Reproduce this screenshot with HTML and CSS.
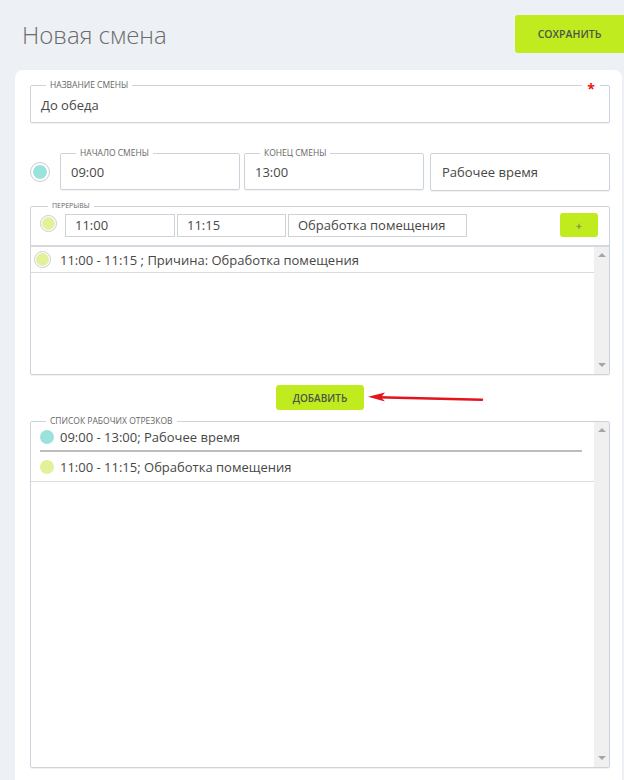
FILE: index.html
```html
<!DOCTYPE html>
<html lang="ru">
<head>
    <meta charset="UTF-8">
    <meta name="viewport" content="width=device-width, initial-scale=1.0">
    <title>Новая смена</title>
    <link rel="stylesheet" href="styles.css">
</head>
<body>
    <div class="top">
        <h1 class="title">Новая смена</h1>
        <button class="btn btn-save">СОХРАНИТЬ</button>
    </div>

    <div class="card">
        <fieldset class="field field-name">
            <legend>НАЗВАНИЕ СМЕНЫ</legend>
            <span class="req">*</span>
            <div class="value">До обеда</div>
        </fieldset>

        <div class="time-row">
            <span class="dot dot-ring dot-big teal"></span>
            <fieldset class="field field-time">
                <legend>НАЧАЛО СМЕНЫ</legend>
                <div class="value">09:00</div>
            </fieldset>
            <fieldset class="field field-time">
                <legend>КОНЕЦ СМЕНЫ</legend>
                <div class="value">13:00</div>
            </fieldset>
            <div class="plain-box">Рабочее время</div>
        </div>

        <fieldset class="field group breaks">
            <legend>ПЕРЕРЫВЫ</legend>
            <div class="break-form">
                <span class="dot dot-ring lime"></span>
                <div class="inp inp-from">11:00</div>
                <div class="inp inp-to">11:15</div>
                <div class="inp inp-reason">Обработка помещения</div>
                <button class="btn btn-plus">+</button>
            </div>
            <div class="listbox breaks-list">
                <div class="list-items">
                    <div class="item">
                        <span class="dot dot-ring lime"></span>
                        11:00 - 11:15 ; Причина: Обработка помещения
                    </div>
                </div>
                <div class="scroll"><span class="arr up"></span><span class="arr down"></span></div>
            </div>
        </fieldset>

        <div class="add-row">
            <button class="btn btn-add">ДОБАВИТЬ</button>
            <!-- annotation arrow -->
            <svg class="pointer" width="120" height="16" viewBox="0 0 120 16">
                <line x1="12" y1="8.2" x2="116" y2="10.8" stroke="#e3141c" stroke-width="2.4" stroke-linecap="round"/>
                <polygon points="2,7.7 19,3.6 15,8.3 19,12.4" fill="#e3141c"/>
            </svg>
        </div>

        <fieldset class="field group segments">
            <legend>СПИСОК РАБОЧИХ ОТРЕЗКОВ</legend>
            <div class="listbox seg-list">
                <div class="list-items">
                    <div class="seg seg-first">
                        <span class="dot teal"></span>
                        09:00 - 13:00; Рабочее время
                    </div>
                    <div class="seg-sep"></div>
                    <div class="seg seg-last">
                        <span class="dot lime"></span>
                        11:00 - 11:15; Обработка помещения
                    </div>
                </div>
                <div class="scroll"><span class="arr up"></span><span class="arr down"></span></div>
            </div>
        </fieldset>
    </div>
</body>
</html>
```

FILE: styles.css
```css
body {
    margin: 0;
    background: #edf0f4;
    font-family: 'Open Sans', sans-serif;
    font-size: 13px;
    color: #474747;
}
.top {
    display: flex;
    align-items: center;
    justify-content: space-between;
    height: 68px;
    padding-left: 22px;
}
.title {
    margin: 0;
    font-size: 24px;
    font-weight: 300;
    color: #6b6b6b;
}
.btn {
    background: #c0eb1f;
    border: none;
    border-radius: 3px;
    color: #4d5548;
    font-family: inherit;
    font-weight: 600;
    cursor: pointer;
    padding: 0;
}
.btn-save {
    width: 109px;
    height: 38px;
    font-size: 10.5px;
    border-radius: 3px 0 0 3px;
}
.card {
    background: #fff;
    margin: 2px 2px 0 15px;
    border-radius: 8px 8px 0 0;
    padding: 10px 12px 20px 15px;
}

/* fieldsets with a label on the border */
.field {
    margin: 0;
    padding: 0 10px;
    min-width: 0;
    border: 1px solid #cdd3db;
    border-radius: 2px;
    box-shadow: 0 1px 1px rgba(0, 0, 0, 0.06);
    position: relative;
    box-sizing: border-box;
}
.field legend {
    font-size: 8.5px;
    line-height: 10px;
    color: #666;
    margin-left: 5px;
    padding: 0 4px;
}
.value {
    height: 32px;
    line-height: 30px;
}
.req {
    position: absolute;
    top: -8px;
    right: 9px;
    padding: 0 5px;
    background: #fff;
    color: #f01010;
    font-size: 14px;
    font-weight: bold;
    line-height: 14px;
}

.time-row {
    display: flex;
    align-items: flex-end;
    margin-top: 25px;
}
.field-time {
    width: 180px;
    margin-right: 4px;
}
.field-time .value {
    height: 31px;
    line-height: 29px;
}
.plain-box {
    width: 180px;
    height: 38px;
    box-sizing: border-box;
    margin: 0 0 -1px 2px;
    border: 1px solid #cdd3db;
    border-radius: 2px;
    box-shadow: 0 1px 1px rgba(0, 0, 0, 0.06);
    padding-left: 11px;
    line-height: 36px;
}

.dot {
    display: inline-block;
    flex: none;
    width: 14px;
    height: 14px;
    border-radius: 50%;
    box-sizing: content-box;
}
.dot-ring {
    width: 13px;
    height: 13px;
    padding: 1px;
    border: 1px solid #c9ccd0;
    background-clip: content-box;
}
.dot-big {
    width: 14px;
    height: 14px;
    padding: 2px;
    margin: 0 10px 8px 0;
}
.teal { background-color: #9be2dc; }
.lime { background-color: #e3f19a; }

.group {
    padding: 0;
}
.group legend {
    margin-left: 15px;
}
.breaks {
    margin-top: 11px;
}
.breaks legend {
    font-size: 7px;
    margin-left: 17px;
}
.break-form {
    display: flex;
    align-items: flex-start;
    height: 34px;
    box-sizing: border-box;
    padding: 3px 11px 0 9px;
}
.break-form .dot {
    margin: 1px 8px 0 0;
}
.inp {
    height: 23px;
    box-sizing: border-box;
    border: 1px solid #cdd3db;
    padding-left: 9px;
    line-height: 21px;
    margin-right: 2px;
}
.inp-from { width: 110px; }
.inp-to { width: 109px; }
.inp-reason { width: 179px; }
.btn-plus {
    margin: -1px 0 0 auto;
    width: 38px;
    height: 24px;
    font-size: 11px;
    font-weight: 400;
    color: #666;
}

.listbox {
    display: flex;
}
.breaks-list {
    border-top: 2px solid #d4d9df;
    height: 127px;
}
.list-items {
    flex: 1;
}
.item {
    display: flex;
    align-items: center;
    height: 25px;
    border-bottom: 1px solid #d9dde2;
    padding-left: 3px;
}
.item .dot {
    margin-right: 9px;
}
.scroll {
    width: 15px;
    background: #f0f0f0;
    display: flex;
    flex-direction: column;
    justify-content: space-between;
    align-items: center;
    padding: 6px 0 7px;
    box-sizing: border-box;
}
.arr {
    width: 0;
    height: 0;
    border-left: 4px solid transparent;
    border-right: 4px solid transparent;
}
.arr.up { border-bottom: 4px solid #a6a6a6; }
.arr.down { border-top: 4px solid #a6a6a6; }

.add-row {
    position: relative;
    display: flex;
    justify-content: center;
    margin: 10px 0 6px;
}
.btn-add {
    width: 88px;
    height: 25px;
    font-size: 10px;
}
.pointer {
    position: absolute;
    left: 336px;
    top: 4px;
}

.seg-list {
    height: 341px;
}
.seg-list .scroll {
    margin-top: -4px;
    height: 345px;
}
.seg {
    display: flex;
    align-items: center;
    padding-left: 9px;
}
.seg .dot {
    margin-right: 6px;
}
.seg-first {
    height: 21px;
}
.seg-sep {
    height: 2px;
    background: #bdbdbd;
    margin: 3px 12px 0 9px;
}
.seg-last {
    height: 29px;
    border-bottom: 1px solid #d9dde2;
}
```
